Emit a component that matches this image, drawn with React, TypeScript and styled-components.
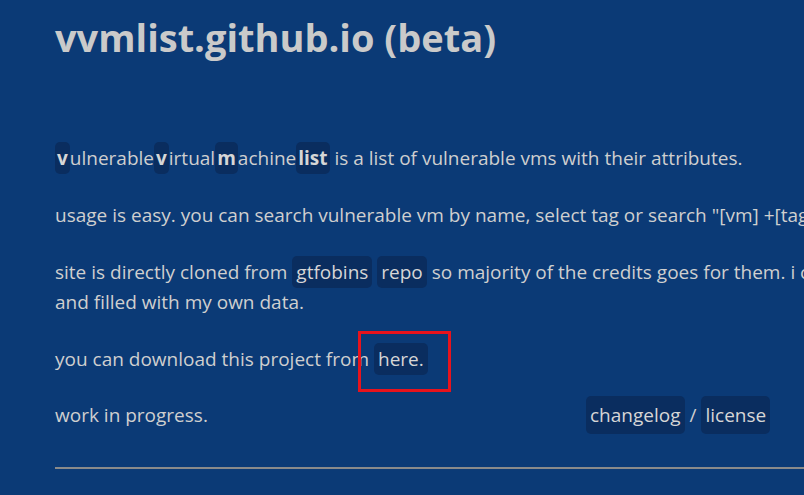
import React from "react";
import styled, { createGlobalStyle } from "styled-components";

const Global = createGlobalStyle`
  html, body { margin: 0; padding: 0; background: #0b3a76; overflow: hidden; }
  body { font-family: "Open Sans", "Noto Sans", sans-serif; color: #cfcfcf; }
`;

const Page = styled.div`
  width: 1000px;
  padding: 11px 0 0 55px;
  box-sizing: border-box;
`;

const Title = styled.h1`
  margin: 0 0 80px 0;
  font-size: 38px;
  font-weight: 700;
  line-height: 52px;
  color: #cacaca;
`;

const Para = styled.p<{ $width?: number; $gap?: number }>`
  margin: 0 0 ${(p) => p.$gap ?? 27}px 0;
  font-size: 19px;
  line-height: 30px;
  width: ${(p) => p.$width ?? 900}px;
`;

const Chip = styled.a<{ $bold?: boolean }>`
  background: #0a2d5f;
  color: #d6d6d6;
  border-radius: 5px;
  padding: 3px ${(p) => (p.$bold ? 2 : 4)}px;
  font-weight: ${(p) => (p.$bold ? 700 : 400)};
  text-decoration: none;
  position: relative;
`;

const Mark = styled.span`
  position: absolute;
  left: -16px;
  top: -12px;
  width: 93px;
  height: 61px;
  box-sizing: border-box;
  border: 3px solid #e8131c;
  pointer-events: none;
`;

const Footer = styled.div`
  display: grid;
  grid-template-columns: 531px auto;
  align-items: center;
  font-size: 19px;
  line-height: 32px;
`;

const Links = styled.div`
  display: flex;
  align-items: center;
  gap: 5px;
`;

const Rule = styled.hr`
  margin: 33px 0 0 0;
  border: none;
  border-top: 2px solid #8a8a8a;
  width: 900px;
`;

export default function App() {
  return (
    <>
      <Global />
      <Page>
        <Title>vvmlist.github.io (beta)</Title>
        <Para>
          <Chip $bold>v</Chip>ulnerable<Chip $bold>v</Chip>irtual
          <Chip $bold>m</Chip>achine<Chip $bold>list</Chip> is a list of
          vulnerable vms with their attributes.
        </Para>
        <Para>
          usage is easy. you can search vulnerable vm by name, select tag or
          search "[vm] +[tag]".
        </Para>
        <Para $width={935}>
          site is directly cloned from <Chip>gtfobins</Chip> <Chip>repo</Chip>{" "}
          so majority of the credits goes for them. i changed some parts and
          filled with my own data.
        </Para>
        <Para $gap={22}>
          you can download this project from{" "}
          <Chip>
            here.
            <Mark />
          </Chip>
        </Para>
        <Footer>
          <span>work in progress.</span>
          <Links>
            <Chip>changelog</Chip>/<Chip>license</Chip>
          </Links>
        </Footer>
        <Rule />
      </Page>
    </>
  );
}
